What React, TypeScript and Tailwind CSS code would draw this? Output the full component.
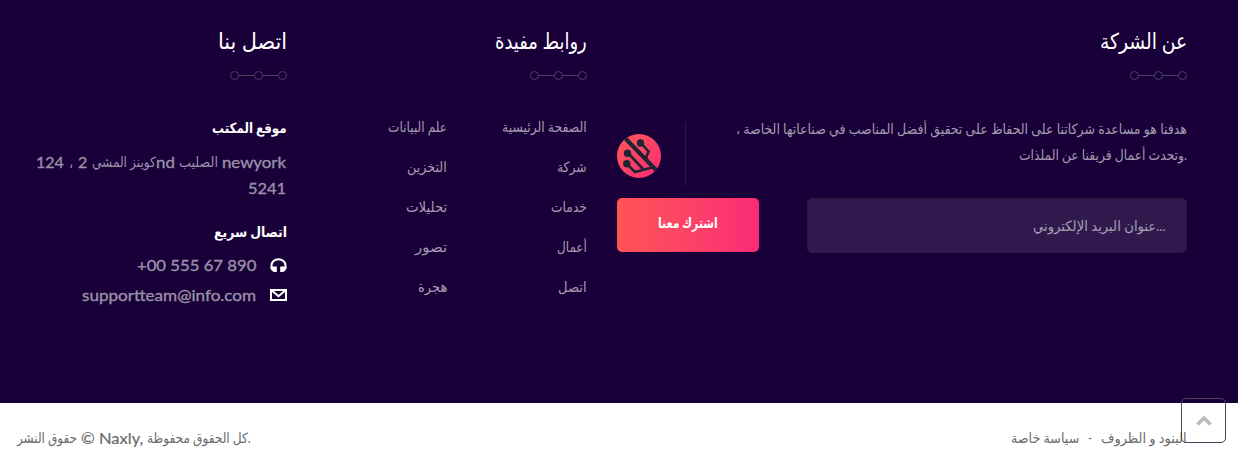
import { useLayoutEffect, useRef, useState } from "react";
import type { ReactNode } from "react";

const FONT = "font-['Lato','DejaVu_Sans',sans-serif]";

/** One line of text, condensed or stretched to the width of its box. */
function Line({ className = "", dir = "ltr", children }: { className?: string; dir?: "ltr" | "rtl"; children: ReactNode }) {
  const box = useRef<HTMLSpanElement>(null);
  const text = useRef<HTMLSpanElement>(null);
  const [scale, setScale] = useState(1);

  useLayoutEffect(() => {
    if (box.current && text.current) {
      setScale(box.current.offsetWidth / text.current.offsetWidth);
    }
  }, []);

  return (
    <span ref={box} className={`block whitespace-nowrap text-left ${className}`}>
      <span ref={text} dir={dir} className="inline-block origin-left" style={{ transform: `scaleX(${scale})` }}>
        {children}
      </span>
    </span>
  );
}

function Heading({ width, children }: { width: string; children: ReactNode }) {
  return (
    <div className="flex flex-col items-end">
      <h3 className="text-[22px] leading-[32px] text-white">
        <Line className={width}>{children}</Line>
      </h3>
      <div className="mt-[14px] flex items-center">
        <i className="size-[9px] rounded-full border border-[#46445a]" />
        <i className="h-px w-[15px] bg-[#46445a]" />
        <i className="size-[9px] rounded-full border border-[#46445a]" />
        <i className="h-px w-[15px] bg-[#46445a]" />
        <i className="size-[9px] rounded-full border border-[#46445a]" />
      </div>
    </div>
  );
}

function Logo() {
  return (
    <svg viewBox="0 0 44 44" className="size-11 shrink-0">
      <defs>
        <linearGradient id="mark" x1="0" y1="0" x2="1" y2="1">
          <stop offset="0" stopColor="#ff5a55" />
          <stop offset="1" stopColor="#fa2a75" />
        </linearGradient>
        <clipPath id="disc">
          <circle cx="22" cy="22" r="22" />
        </clipPath>
      </defs>
      <circle cx="22" cy="22" r="22" fill="url(#mark)" />
      <g clipPath="url(#disc)" stroke="#1f2434" fill="none">
        <path d="M7 3L41 38" strokeWidth="4" />
        <path d="M24 9L31.5 17.5L28 26.5" strokeWidth="2.6" />
        <path d="M11 19L26 35" strokeWidth="2.6" />
        <path d="M10 30L18 38L37 33" strokeWidth="2.6" />
      </g>
      <g fill="#1f2434">
        <circle cx="23.5" cy="9" r="3.7" />
        <circle cx="10.5" cy="19.3" r="3.7" />
        <circle cx="9.8" cy="29.8" r="3.7" />
      </g>
    </svg>
  );
}

const services = [
  ["علم البيانات", "w-[59px]"],
  ["التخزين", "w-[40px]"],
  ["تحليلات", "w-[41px]"],
  ["تصور", "w-[32px]"],
  ["هجرة", "w-[29px]"],
];
const pages = [
  ["الصفحة الرئيسية", "w-[85px]"],
  ["شركة", "w-[30px]"],
  ["خدمات", "w-[36px]"],
  ["أعمال", "w-[30px]"],
  ["اتصل", "w-[29px]"],
];

function Links({ items }: { items: string[][] }) {
  return (
    <ul className="flex flex-col items-end">
      {items.map(([label, width]) => (
        <li key={label} className="h-10 text-[14px] leading-[26px] text-[#a39db0]">
          <Line className={width}>{label}</Line>
        </li>
      ))}
    </ul>
  );
}

export default function App() {
  return (
    <div className={`relative h-[464px] w-[1238px] overflow-hidden bg-white ${FONT}`}>
      <footer className="flex h-[403px] bg-[#190039] pt-[25px]">
        <section className="flex w-[287px] flex-col items-end">
          <Heading width="w-[69px]">اتصل بنا</Heading>
          <h4 className="mt-[35px] text-[14px] leading-[26px] font-bold text-white">
            <Line className="w-[75px]">موقع المكتب</Line>
          </h4>
          <address className="mt-[8px] flex flex-col items-end text-[16px] leading-[26px] text-[#9a91a9] not-italic">
            <div className="flex pr-px">
              <Line className="w-[28px] [-webkit-text-stroke:0.35px]">124</Line>
              <Line className="ml-[5px] w-[4px]">،</Line>
              <Line className="ml-[5px] w-[9px] [-webkit-text-stroke:0.35px]">2</Line>
              <Line className="ml-[5px] w-[64px] text-[14px]">كوينز المشي</Line>
              <Line className="w-[19px] [-webkit-text-stroke:0.35px]">nd</Line>
              <Line className="ml-[4px] w-[39px] text-[14px]">الصليب</Line>
              <Line className="ml-[4px] w-[64px] [-webkit-text-stroke:0.35px]">newyork</Line>
            </div>
            <Line className="mr-px w-[38px] [-webkit-text-stroke:0.35px]">5241</Line>
          </address>
          <h4 className="mt-[18px] text-[14px] leading-[26px] font-bold text-white">
            <Line className="w-[73px]">اتصال سريع</Line>
          </h4>
          <div className="mt-[5px] flex h-[30px] items-center gap-[14px] text-[16px] leading-[30px] text-[#9a91a9]">
            <Line className="w-[119px] [-webkit-text-stroke:0.35px]">+00 555 67 890</Line>
            <svg viewBox="0 0 17 15" className="h-[15px] w-[17px]">
              <path d="M1.5 11V7.5a7 6.3 0 0 1 14 0V11" fill="none" stroke="#fff" strokeWidth="2" />
              <path d="M1 8.5h5.8V14H4Q.7 12.5.7 9.5zM16 8.5h-5.8V14H13q3.3-1.5 3.3-4.5z" fill="#fff" />
            </svg>
          </div>
          <div className="flex h-[30px] items-center gap-[14px] text-[16px] leading-[30px] text-[#9a91a9]">
            <Line className="w-[174px] [-webkit-text-stroke:0.35px]">supportteam@info.com</Line>
            <svg viewBox="0 0 17 12" className="h-[12px] w-[17px]">
              <path d="M1 1H16V11H1ZM1.5 1.2L8.5 7.2L15.5 1.2" fill="none" stroke="#fff" strokeWidth="2" />
              <path d="M1 0H5L1 4ZM16 0H12L16 4Z" fill="#fff" />
            </svg>
          </div>
        </section>

        <section className="flex w-[300px] flex-col items-end">
          <Heading width="w-[92px]">روابط مفيدة</Heading>
          <div className="mt-[34px] flex gap-[55px]">
            <Links items={services} />
            <Links items={pages} />
          </div>
        </section>

        <section className="ml-[30px] w-[570px]">
          <Heading width="w-[87px]">عن الشركة</Heading>
          <div className="mt-[36px] flex h-[76px]">
            <div className="mt-[6px] flex h-16 w-[69px] items-center border-r border-[#2d1a4b] pt-1">
              <Logo />
            </div>
            <div className="flex flex-1 flex-col items-end text-[14px] leading-[26px] text-[#a39db0]">
              <Line dir="rtl" className="w-[451px]">هدفنا هو مساعدة شركاتنا على الحفاظ على تحقيق أفضل المناصب في صناعاتها الخاصة ،</Line>
              <Line className="w-[168px]">وتحدث أعمال فريقنا عن الملذات.</Line>
            </div>
          </div>
          <form className="mt-[6px] flex justify-between">
            <button
              type="button"
              className="flex h-[54px] w-[142px] justify-center rounded-[5px] bg-gradient-to-r from-[#ff5454] to-[#fa2a75] pt-[12px] text-[14px] leading-[26px] font-bold text-white"
            >
              <Line className="w-[60px]">اشترك معنا</Line>
            </button>
            <div className="flex h-[55px] w-[380px] items-center justify-end rounded-[5px] border border-[#251b3b] bg-[#301a4d] pr-[20px] text-[14px] text-[#a79fb2]">
              <Line className="w-[133px]">عنوان البريد الإلكتروني...</Line>
            </div>
          </form>
        </section>
      </footer>

      <div className="flex h-[61px] items-start justify-between pt-[22px] pr-[51px] pl-[17px] text-[14px] leading-[26px] text-[#6a6a6e]">
        <div className="flex">
          <Line className="w-[60px]">حقوق النشر</Line>
          <Line className="ml-[4px] w-[62px] text-[16px] [-webkit-text-stroke:0.2px]">© Naxly,</Line>
          <Line className="ml-[4px] w-[104px]">كل الحقوق محفوظة.</Line>
        </div>
        <div className="flex">
          <Line className="w-[68px]">سياسة خاصة</Line>
          <Line className="ml-[9px] w-[4px]">-</Line>
          <Line className="ml-[9px] w-[86px]">البنود و الظروف</Line>
        </div>
      </div>

      <button type="button" className="absolute top-[398px] left-[1181px] flex size-[45px] items-center justify-center rounded-[5px] border border-[#48455a]">
        <svg viewBox="0 0 16 10" className="h-[10px] w-[16px]">
          <path d="M1.5 8.5L8 2L14.5 8.5" fill="none" stroke="#bbb" strokeWidth="3.6" />
        </svg>
      </button>
    </div>
  );
}
